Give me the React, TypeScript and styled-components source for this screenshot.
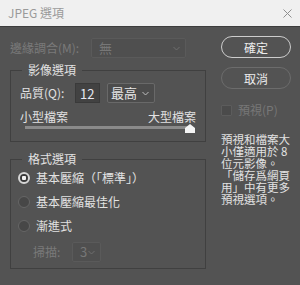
import React from 'react';
import styled, { createGlobalStyle } from 'styled-components';

const GlobalStyle = createGlobalStyle`
  html, body {
    margin: 0;
    padding: 0;
    background: #535353;
  }
`;

const Window = styled.div`
  width: 300px;
  height: 285px;
  background: #535353;
  display: flex;
  flex-direction: column;
  overflow: hidden;
  font-family: "Noto Sans CJK TC", "Noto Sans", sans-serif;
  font-size: 12px;
  color: #e2e2e2;
`;

const TitleBar = styled.div`
  height: 26px;
  flex: none;
  background: #f0f0f0;
  border-bottom: 1px solid #3d3d3d;
  display: flex;
  align-items: center;
  justify-content: space-between;
  padding: 0 8px;
`;

const Title = styled.span`
  font-size: 12px;
  line-height: 14px;
  color: #9a9a9a;
`;

const Main = styled.div`
  display: flex;
  gap: 15px;
  padding: 9px 9px 0 10px;
`;

const LeftCol = styled.div`
  width: 196px;
  display: flex;
  flex-direction: column;
`;

const RightCol = styled.div`
  width: 70px;
  display: flex;
  flex-direction: column;
`;

const Row = styled.div<{ $mt?: number; $ml?: number; $h?: number }>`
  display: flex;
  align-items: center;
  height: ${p => p.$h ?? 20}px;
  margin-top: ${p => p.$mt ?? 0}px;
  margin-left: ${p => p.$ml ?? 0}px;
`;

const Label = styled.span<{ $w: number; $disabled?: boolean }>`
  width: ${p => p.$w}px;
  flex: none;
  line-height: 14px;
  white-space: nowrap;
  color: ${p => (p.$disabled ? '#7a7a7a' : '#e2e2e2')};
`;

const Select = styled.div<{ $w: number; $disabled?: boolean }>`
  width: ${p => p.$w}px;
  height: 20px;
  box-sizing: border-box;
  display: flex;
  align-items: center;
  justify-content: space-between;
  padding: 0 5px 0 ${p => (p.$disabled ? 7 : 3)}px;
  border: 1px solid ${p => (p.$disabled ? '#5a5a5a' : '#696969')};
  border-radius: 2px;
  background: ${p => (p.$disabled ? '#4f4f4f' : '#4c4c4c')};
  color: ${p => (p.$disabled ? '#777777' : '#e6e6e6')};
  font-size: 13px;
  line-height: 14px;
`;

const NumberBox = styled.div`
  width: 25px;
  height: 20px;
  box-sizing: border-box;
  margin-right: 7px;
  padding-left: 4px;
  display: flex;
  align-items: center;
  background: #424242;
  border: 1px solid #3a3a3a;
  color: #e6e8f2;
  font-size: 13px;
`;

const Group = styled.fieldset<{ $h: number; $mt: number }>`
  margin: ${p => p.$mt}px 0 0;
  height: ${p => p.$h}px;
  box-sizing: border-box;
  border: 1px solid #404040;
  padding: 0 9px;
  min-width: 0;
`;

const Legend = styled.legend`
  padding: 0 6px;
  margin-left: 2px;
  font-size: 12px;
  line-height: 14px;
  color: #e2e2e2;
`;

const SizeLabels = styled.div`
  display: flex;
  justify-content: space-between;
  margin-top: 7px;
  line-height: 14px;
`;

const Track = styled.div`
  position: relative;
  height: 3px;
  margin: 2px 6px 0 5px;
  background: #8a8a8a;
`;

const Thumb = styled.svg`
  position: absolute;
  right: -5px;
  top: -2px;
`;

const RadioList = styled.div`
  margin-left: -2px;
  display: flex;
  flex-direction: column;
`;

const RadioRow = styled.div`
  height: 24px;
  display: flex;
  align-items: center;
  gap: 6px;
  line-height: 14px;
`;

const RadioDot = styled.span<{ $on?: boolean }>`
  width: 12px;
  height: 12px;
  box-sizing: border-box;
  border-radius: 50%;
  flex: none;
  border: ${p => (p.$on ? '2px solid #d6d6d6' : '1px solid #666666')};
  background: ${p =>
    p.$on
      ? 'radial-gradient(circle, #f2f2f2 0 2px, #3a3a3a 2.5px)'
      : '#474747'};
`;

const Button = styled.div<{ $primary?: boolean }>`
  height: 22px;
  box-sizing: border-box;
  margin-bottom: 9px;
  border-radius: 11px;
  border: 1px solid ${p => (p.$primary ? '#cdcdcd' : '#6c6c6c')};
  display: flex;
  align-items: center;
  justify-content: center;
  font-size: 12px;
  color: #ececec;
`;

const CheckRow = styled.div`
  display: flex;
  align-items: center;
  gap: 6px;
  height: 14px;
  margin-top: 5px;
  color: #777777;
  line-height: 14px;
`;

const CheckBox = styled.span`
  width: 11px;
  height: 11px;
  box-sizing: border-box;
  border: 1px solid #5c5c5c;
  background: #4b4b4b;
  border-radius: 1px;
`;

const Note = styled.div`
  margin-top: 16px;
  font-size: 11.5px;
  line-height: 12px;
  color: #e2e2e2;
  white-space: nowrap;

  span {
    display: block;
  }
`;

const Chevron: React.FC<{ color: string }> = ({ color }) => (
  <svg width="7" height="5" viewBox="0 0 7 5">
    <path d="M0.5 1 L3.5 4 L6.5 1" fill="none" stroke={color} strokeWidth="1" />
  </svg>
);

const App: React.FC = () => {
  return (
    <Window>
      <GlobalStyle />
      <TitleBar>
        <Title>JPEG 選項</Title>
        <svg width="9" height="9" viewBox="0 0 9 9">
          <path d="M0.5 0.5 L8.5 8.5 M8.5 0.5 L0.5 8.5" stroke="#8f8f8f" strokeWidth="1" />
        </svg>
      </TitleBar>
      <Main>
        <LeftCol>
          <Row $mt={2}>
            <Label $w={81} $disabled>邊緣調合(M):</Label>
            <Select $w={95} $disabled>
              <span>無</span>
              <Chevron color="#6f6f6f" />
            </Select>
          </Row>

          <Group $mt={5} $h={79}>
            <Legend>影像選項</Legend>
            <Row $mt={6}>
              <Label $w={55}>品質(Q):</Label>
              <NumberBox>12</NumberBox>
              <Select $w={48}>
                <span>最高</span>
                <Chevron color="#bdbdbd" />
              </Select>
            </Row>
            <SizeLabels>
              <span>小型檔案</span>
              <span>大型檔案</span>
            </SizeLabels>
            <Track>
              <Thumb width="10" height="9" viewBox="0 0 10 9">
                <path d="M5 0 L10 4 L10 9 L0 9 L0 4 Z" fill="#f4f4f4" />
              </Thumb>
            </Track>
          </Group>

          <Group $mt={10} $h={117}>
            <Legend>格式選項</Legend>
            <RadioList>
              <RadioRow>
                <RadioDot $on />
                <span>基本壓縮（「標準」）</span>
              </RadioRow>
              <RadioRow>
                <RadioDot />
                <span>基本壓縮最佳化</span>
              </RadioRow>
              <RadioRow>
                <RadioDot />
                <span>漸進式</span>
              </RadioRow>
            </RadioList>
            <Row $mt={4} $ml={13}>
              <Label $w={39} $disabled>掃描:</Label>
              <Select $w={29} $disabled>
                <span>3</span>
                <Chevron color="#6f6f6f" />
              </Select>
            </Row>
          </Group>
        </LeftCol>

        <RightCol>
          <Button $primary>確定</Button>
          <Button>取消</Button>
          <CheckRow>
            <CheckBox />
            <span>預視(P)</span>
          </CheckRow>
          <Note>
            <span>預視和檔案大</span>
            <span>小僅適用於 8</span>
            <span>位元影像。</span>
            <span>「儲存爲網頁</span>
            <span>用」中有更多</span>
            <span>預視選項。</span>
          </Note>
        </RightCol>
      </Main>
    </Window>
  );
};

export default App;
